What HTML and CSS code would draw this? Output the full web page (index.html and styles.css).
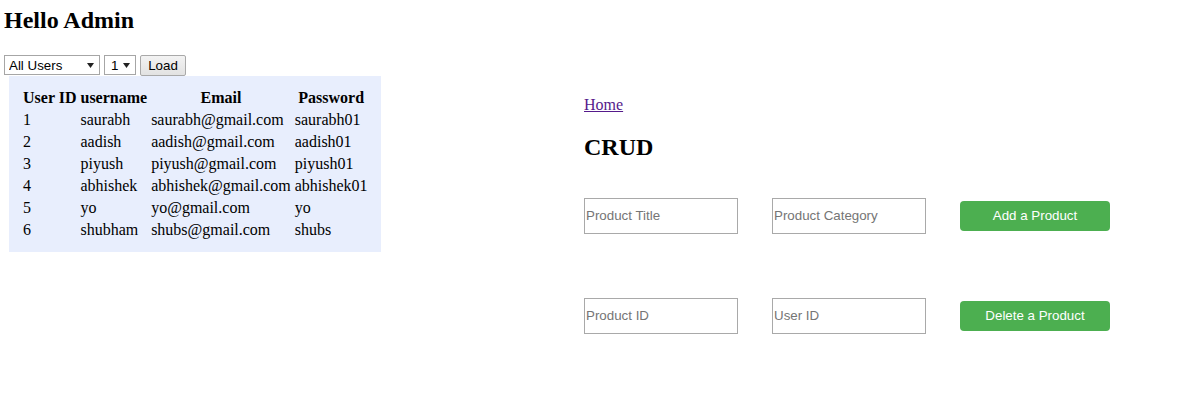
FILE: index.html
```html
<!DOCTYPE html>
<html>
<head>
<meta charset="utf-8">
<title>Admin</title>
<link rel="stylesheet" href="styles.css">
</head>
<body>
<div class="page">
  <div class="left">
    <h2 class="title">Hello Admin</h2>
    <div class="controls">
      <select class="sel sel-users"><option>All Users</option></select>
      <select class="sel sel-page"><option>1</option></select>
      <button class="load">Load</button>
    </div>
    <div class="table-wrap">
      <table class="users">
        <tr><th>User ID</th><th>username</th><th>Email</th><th>Password</th></tr>
        <tr><td>1</td><td>saurabh</td><td>saurabh@gmail.com</td><td>saurabh01</td></tr>
        <tr><td>2</td><td>aadish</td><td>aadish@gmail.com</td><td>aadish01</td></tr>
        <tr><td>3</td><td>piyush</td><td>piyush@gmail.com</td><td>piyush01</td></tr>
        <tr><td>4</td><td>abhishek</td><td>abhishek@gmail.com</td><td>abhishek01</td></tr>
        <tr><td>5</td><td>yo</td><td>yo@gmail.com</td><td>yo</td></tr>
        <tr><td>6</td><td>shubham</td><td>shubs@gmail.com</td><td>shubs</td></tr>
      </table>
    </div>
  </div>
  <div class="right">
    <a class="home" href="#">Home</a>
    <h2 class="crud">CRUD</h2>
    <div class="forms">
      <div class="form-row">
        <input class="field" type="text" placeholder="Product Title">
        <input class="field" type="text" placeholder="Product Category">
        <button class="action">Add a Product</button>
      </div>
      <div class="form-row">
        <input class="field" type="text" placeholder="Product ID">
        <input class="field" type="text" placeholder="User ID">
        <button class="action">Delete a Product</button>
      </div>
    </div>
  </div>
</div>
</body>
</html>
```
FILE: styles.css
```css
html, body {
  margin: 0;
  padding: 0;
  background: #ffffff;
}
body {
  font-family: "Liberation Serif", "Times New Roman", serif;
  font-size: 16px;
  color: #000;
}
.page {
  display: flex;
  align-items: flex-start;
  padding: 0 4px;
}
.left {
  flex: 0 0 580px;
}
.title {
  font-size: 24px;
  line-height: 27px;
  font-weight: bold;
  margin: 7px 0 21px 0;
}
.controls {
  display: flex;
  align-items: flex-start;
  gap: 4px;
  height: 21px;
}
.sel {
  -webkit-appearance: none;
  appearance: none;
  font-family: "Liberation Sans", Arial, sans-serif;
  font-size: 13.33px;
  color: #000;
  height: 20px;
  border: 1px solid #a6a6a6;
  border-radius: 0;
  background-color: #fff;
  background-image: url("data:image/svg+xml,%3Csvg xmlns='http://www.w3.org/2000/svg' width='7' height='5'%3E%3Cpath d='M0 0h7L3.5 5z' fill='%23222'/%3E%3C/svg%3E");
  background-repeat: no-repeat;
  margin: 0;
  padding: 0 0 0 4px;
}
.sel-users {
  width: 96px;
  background-position: 82px 7px;
}
.sel-page {
  width: 32px;
  padding-left: 6px;
  background-position: 18px 7px;
}
.load {
  font-family: "Liberation Sans", Arial, sans-serif;
  font-size: 13.33px;
  width: 46px;
  height: 21px;
  padding: 0;
  margin: 0;
  border: 1px solid #a9a9a9;
  border-radius: 2px;
  background: linear-gradient(#f3f3f3, #e2e2e2);
  color: #000;
}
.table-wrap {
  display: inline-block;
  margin-left: 5px;
  padding: 10px 10px 10px 11px;
  background: #e8eefd;
}
.users {
  border-collapse: separate;
  border-spacing: 2px;
  font-size: 16px;
}
.users th, .users td {
  padding: 1px;
  line-height: 18px;
}
.users td {
  text-align: left;
}
.users th {
  font-weight: bold;
  text-align: center;
}
.right {
  flex: 1;
  padding-top: 96px;
}
.home {
  display: block;
  width: max-content;
  color: #551a8b;
  text-decoration: underline;
  line-height: 18px;
}
.crud {
  font-size: 24px;
  line-height: 27px;
  font-weight: bold;
  margin: 20px 0 37px 0;
}
.forms {
  display: flex;
  flex-direction: column;
  gap: 64px;
}
.form-row {
  display: flex;
  align-items: center;
  gap: 34px;
}
.field {
  box-sizing: border-box;
  width: 154px;
  height: 36px;
  margin: 0;
  padding: 0 1px 1px 1px;
  border: 1px solid #a9a9a9;
  border-radius: 0;
  font-family: "Liberation Sans", Arial, sans-serif;
  font-size: 13.33px;
  color: #000;
  outline: none;
}
.field::placeholder {
  color: #757575;
}
.action {
  width: 150px;
  height: 30px;
  margin: 0;
  padding: 0 0 2px 0;
  border: none;
  border-radius: 4px;
  background: #4caf50;
  color: #fff;
  font-family: "Liberation Sans", Arial, sans-serif;
  font-size: 13.33px;
}
```
